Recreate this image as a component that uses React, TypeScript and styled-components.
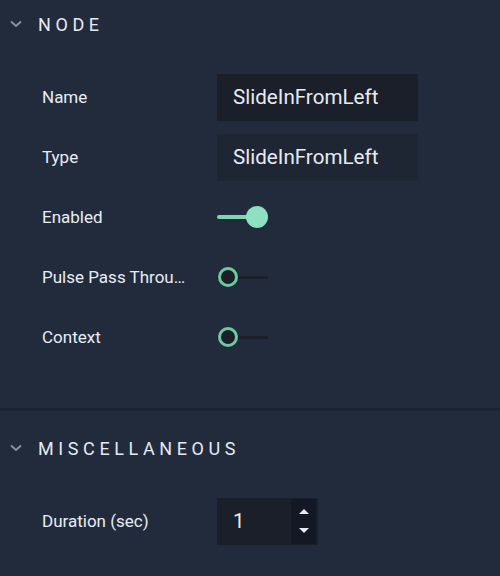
import * as React from "react";
import styled, { createGlobalStyle } from "styled-components";

const GlobalStyle = createGlobalStyle`
  body {
    margin: 0;
    background: #222b3b;
    font-family: Roboto, "Liberation Sans", sans-serif;
  }
`;

const Panel = styled.div`
  width: 500px;
  min-height: 576px;
  background: #222b3b;
  color: #e6ecf4;
`;

const Section = styled.section<{ $padTop?: number; $padBottom?: number }>`
  padding-top: ${p => p.$padTop || 0}px;
  padding-bottom: ${p => p.$padBottom || 0}px;
`;

const Divider = styled.div`
  height: 3px;
  background: #1c2331;
`;

const SectionHeader = styled.div`
  height: 48px;
  display: flex;
  align-items: center;
  padding-left: 9px;
  gap: 15px;
  margin-bottom: 19px;
`;

const Title = styled.span`
  font-size: 18px;
  font-weight: 400;
  letter-spacing: 4.6px;
  color: #e4eaf3;
`;

const Row = styled.div`
  height: 60px;
  display: flex;
  align-items: center;
  padding-left: 42px;
`;

const Label = styled.div`
  width: 148px;
  margin-right: 27px;
  font-size: 17px;
  color: #e8edf5;
  white-space: nowrap;
  overflow: hidden;
  text-overflow: ellipsis;
`;

const TextInput = styled.div<{ $focused?: boolean }>`
  width: 201px;
  height: 47px;
  box-sizing: border-box;
  padding-left: 16px;
  display: flex;
  align-items: center;
  font-size: 20.6px;
  color: #e6ecf5;
  background: ${p => (p.$focused ? "#1a1f29" : "#1e2634")};
`;

const NumberBox = styled.div`
  width: 101px;
  height: 47px;
  box-sizing: border-box;
  display: flex;
  align-items: stretch;
  background: #1a1f29;
  padding: 1px 2px 1px 0;
`;

const NumberValue = styled.div`
  flex: 1;
  padding-left: 16px;
  display: flex;
  align-items: center;
  font-size: 20.6px;
  color: #e6ecf5;
`;

const Spinner = styled.div`
  width: 25px;
  background: #131824;
  display: flex;
  flex-direction: column;
  align-items: center;
  justify-content: space-around;
  padding: 4px 0;
`;

const Arrow = styled.span<{ $down?: boolean }>`
  width: 0;
  height: 0;
  border-left: 5px solid transparent;
  border-right: 5px solid transparent;
  ${p =>
    p.$down
      ? "border-top: 5px solid #e8edf5;"
      : "border-bottom: 5px solid #e8edf5;"}
`;

const Switch = styled.div`
  position: relative;
  width: 51px;
  height: 24px;
  display: flex;
  align-items: center;
`;

const Track = styled.div<{ $on: boolean }>`
  width: 100%;
  height: 3px;
  border-radius: 2px;
  background: ${p => (p.$on ? "transparent" : "#1a1f29")};
`;

const Fill = styled.div`
  position: absolute;
  left: 0;
  top: 10px;
  width: 40px;
  height: 4px;
  border-radius: 2px;
  background: #7fd6b2;
`;

const Thumb = styled.div<{ $on: boolean }>`
  position: absolute;
  top: ${p => (p.$on ? 1 : 2)}px;
  box-sizing: border-box;
  border-radius: 50%;
  ${p =>
    p.$on
      ? `left: 29px; width: 22px; height: 22px; background: #8ee0c1;`
      : `left: 1px; width: 20px; height: 20px; background: #1a1f29; border: 3px solid #6fc9a0;`}
`;

const Chevron = () => (
  <svg width="14" height="10" viewBox="0 0 14 10">
    <path d="M2 2.5 L7 7 L12 2.5" fill="none" stroke="#8a909b" strokeWidth="2" />
  </svg>
);

const Toggle: React.FC<{ on: boolean }> = ({ on }) => (
  <Switch>
    <Track $on={on} />
    {on && <Fill />}
    <Thumb $on={on} />
  </Switch>
);

export default function App() {
  return (
    <Panel>
      <GlobalStyle />
      <Section $padBottom={41}>
        <SectionHeader>
          <Chevron />
          <Title>NODE</Title>
        </SectionHeader>
        <Row>
          <Label>Name</Label>
          <TextInput $focused>SlideInFromLeft</TextInput>
        </Row>
        <Row>
          <Label>Type</Label>
          <TextInput>SlideInFromLeft</TextInput>
        </Row>
        <Row>
          <Label>Enabled</Label>
          <Toggle on />
        </Row>
        <Row>
          <Label>Pulse Pass Through</Label>
          <Toggle on={false} />
        </Row>
        <Row>
          <Label>Context</Label>
          <Toggle on={false} />
        </Row>
      </Section>
      <Divider />
      <Section $padTop={13}>
        <SectionHeader>
          <Chevron />
          <Title>MISCELLANEOUS</Title>
        </SectionHeader>
        <Row>
          <Label>Duration (sec)</Label>
          <NumberBox>
            <NumberValue>1</NumberValue>
            <Spinner>
              <Arrow />
              <Arrow $down />
            </Spinner>
          </NumberBox>
        </Row>
      </Section>
    </Panel>
  );
}
